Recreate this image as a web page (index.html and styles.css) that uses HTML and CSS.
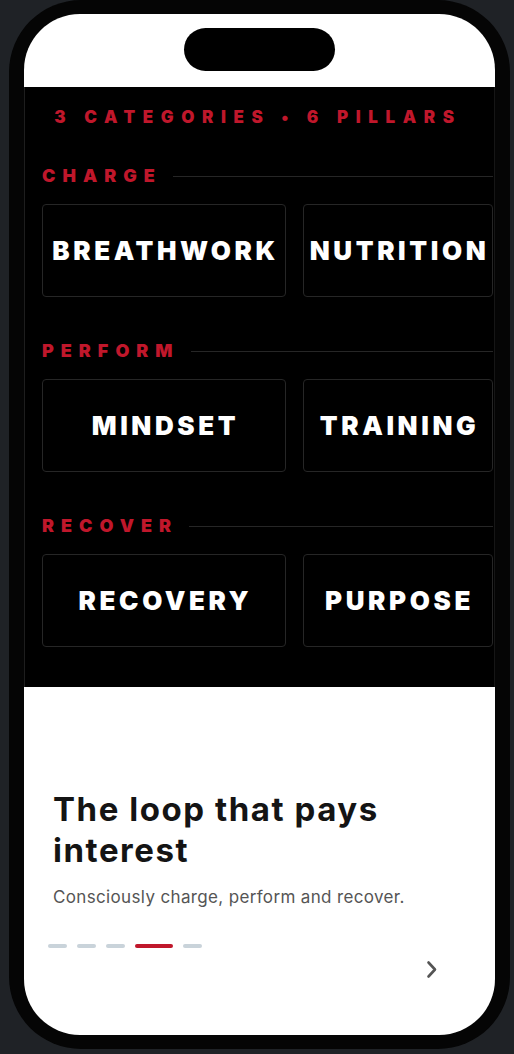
FILE: index.html
```html
<!DOCTYPE html>
<html lang="en">
<head>
<meta charset="utf-8">
<title>Pillars</title>
<link rel="stylesheet" href="styles.css">
</head>
<body>
<div class="phone">
  <div class="screen">
    <div class="status">
      <div class="island"></div>
    </div>
    <div class="dark">
      <div class="kicker">3 CATEGORIES • 6 PILLARS</div>
      <div class="group">
        <div class="label-row"><span class="label">CHARGE</span><span class="rule"></span></div>
        <div class="cards">
          <div class="card wide">BREATHWORK</div>
          <div class="card">NUTRITION</div>
        </div>
      </div>
      <div class="group">
        <div class="label-row"><span class="label">PERFORM</span><span class="rule"></span></div>
        <div class="cards">
          <div class="card wide">MINDSET</div>
          <div class="card">TRAINING</div>
        </div>
      </div>
      <div class="group">
        <div class="label-row"><span class="label">RECOVER</span><span class="rule"></span></div>
        <div class="cards">
          <div class="card wide">RECOVERY</div>
          <div class="card">PURPOSE</div>
        </div>
      </div>
    </div>
    <div class="intro">
      <h1 class="title">The loop that pays interest</h1>
      <p class="sub">Consciously charge, perform and recover.</p>
      <div class="dots">
        <span class="dot"></span>
        <span class="dot"></span>
        <span class="dot"></span>
        <span class="dot active"></span>
        <span class="dot"></span>
      </div>
      <div class="nav">
        <svg class="chev" width="14" height="20" viewBox="0 0 14 20"><path d="M3.5 2.5 L10 9.5 L3.5 16.5" fill="none" stroke="#555" stroke-width="2.6" stroke-linecap="round" stroke-linejoin="round"/></svg>
      </div>
    </div>
  </div>
</div>
</body>
</html>
```

FILE: styles.css
```css
html, body {
  margin: 0;
  padding: 0;
}
body {
  background: #1f2226;
  width: 514px;
  height: 1054px;
  overflow: hidden;
  font-family: "Inter", "Liberation Sans", sans-serif;
}
.phone {
  box-sizing: border-box;
  width: 501px;
  height: 1049px;
  margin-left: 9px;
  background: #050505;
  border-radius: 72px;
  padding: 14px 15px 14px 15px;
}
.screen {
  height: 100%;
  background: #fff;
  border-radius: 56px;
  overflow: hidden;
  display: flex;
  flex-direction: column;
}
.status {
  height: 73px;
  flex: none;
  display: flex;
  justify-content: center;
  padding-top: 14px;
  box-sizing: border-box;
}
.island {
  width: 151px;
  height: 43px;
  background: #000;
  border-radius: 22px;
}
.dark {
  flex: none;
  height: 600px;
  box-sizing: border-box;
  background: #000;
  border-left: 1px solid #1e1e1e;
  border-right: 1px solid #161616;
  padding: 20px 1px 0 17px;
}
.kicker {
  color: #c0172b;
  font-weight: 900;
  font-size: 17px;
  letter-spacing: 7.6px;
  text-align: center;
  line-height: 20px;
  margin-right: 19px;
  white-space: nowrap;
}
.group {
  margin-top: 39px;
}
.group + .group {
  margin-top: 44px;
}
.label-row {
  display: flex;
  align-items: center;
  gap: 11px;
  height: 20px;
}
.label {
  color: #c0172b;
  font-weight: 900;
  font-size: 18px;
  letter-spacing: 7px;
  line-height: 20px;
}
.rule {
  flex: 1;
  height: 1px;
  background: #262626;
}
.cards {
  margin-top: 18px;
  display: grid;
  grid-template-columns: 244px 190px;
  gap: 17px;
}
.card {
  box-sizing: border-box;
  height: 93px;
  border: 1px solid #262626;
  border-radius: 4px;
  display: flex;
  align-items: center;
  justify-content: center;
  color: #fff;
  font-weight: 900;
  font-size: 26px;
  letter-spacing: 3.6px;
  white-space: nowrap;
  padding-left: 3px;
}
.intro {
  flex: 1;
  padding: 102px 20px 0 29px;
}
.title {
  margin: 0;
  font-size: 33px;
  font-weight: 700;
  line-height: 41px;
  color: #141414;
  letter-spacing: 1.55px;
  width: 390px;
}
.sub {
  margin: 16px 0 0;
  font-size: 17px;
  color: #555;
  line-height: 20px;
  letter-spacing: 0.35px;
}
.dots {
  margin-top: 37px;
  margin-left: -5px;
  display: flex;
  gap: 10px;
}
.dot {
  width: 19px;
  height: 4px;
  border-radius: 2px;
  background: #c9d3da;
}
.dot.active {
  width: 38px;
  background: #c0172b;
}
.nav {
  display: flex;
  justify-content: flex-end;
  margin-top: 12px;
  padding-right: 36px;
}
```
